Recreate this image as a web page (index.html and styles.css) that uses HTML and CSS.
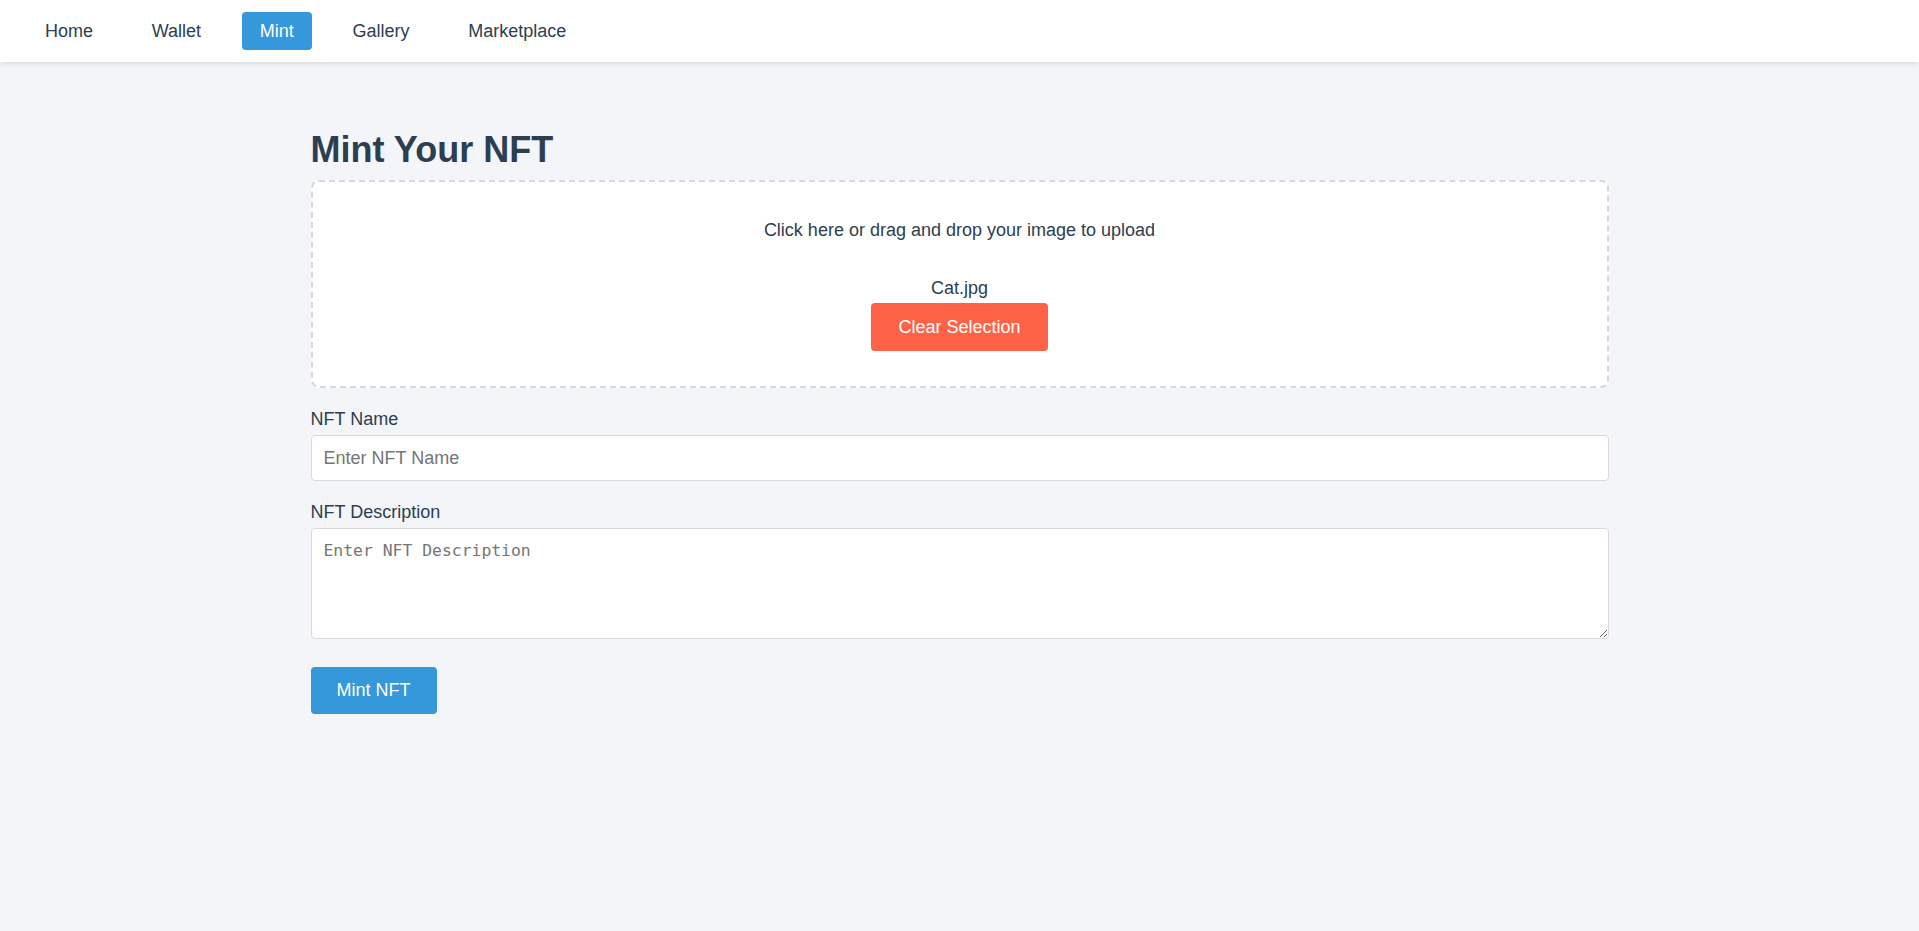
FILE: index.html
```html
<!DOCTYPE html>
<html lang="en">
<head>
<meta charset="utf-8">
<title>Mint Your NFT</title>
<link rel="stylesheet" href="styles.css">
</head>
<body>
<nav class="navbar">
  <a class="nav-link" href="#">Home</a>
  <a class="nav-link" href="#">Wallet</a>
  <a class="nav-link active" href="#">Mint</a>
  <a class="nav-link" href="#">Gallery</a>
  <a class="nav-link" href="#">Marketplace</a>
</nav>
<main class="container">
  <h1 class="title">Mint Your NFT</h1>
  <div class="upload">
    <p class="upload-hint">Click here or drag and drop your image to upload</p>
    <p class="file-name">Cat.jpg</p>
    <button class="btn btn-clear" type="button">Clear Selection</button>
  </div>
  <div class="field">
    <label class="label" for="name">NFT Name</label>
    <input class="input" id="name" type="text" placeholder="Enter NFT Name">
  </div>
  <div class="field">
    <label class="label" for="desc">NFT Description</label>
    <textarea class="textarea" id="desc" placeholder="Enter NFT Description"></textarea>
  </div>
  <button class="btn btn-mint" type="button">Mint NFT</button>
</main>
</body>
</html>
```
FILE: styles.css
```css
* { box-sizing: border-box; }
html, body { margin: 0; padding: 0; }
body {
  background: #f4f5f9;
  font-family: "Liberation Sans", Arial, sans-serif;
  font-size: 18px;
  color: #2c3e50;
}
.navbar {
  height: 62px;
  background: #ffffff;
  box-shadow: 0 2px 5px rgba(0, 0, 0, 0.1);
  display: flex;
  align-items: center;
  gap: 22.7px;
  padding-left: 27px;
}
.nav-link {
  display: block;
  height: 38px;
  line-height: 38px;
  padding: 0 18px;
  border-radius: 4px;
  color: #2c3e50;
  text-decoration: none;
}
.nav-link.active {
  background: #3498db;
  color: #ffffff;
}
.container {
  max-width: 1298px;
  margin: 0 auto;
  padding-top: 67px;
}
.title {
  margin: 0 0 9px;
  font-size: 36px;
  font-weight: bold;
  line-height: normal;
}
.upload {
  background: #ffffff;
  border: 2px dashed #d5d8de;
  border-radius: 8px;
  text-align: center;
  padding: 38px 20px 35px;
}
.upload-hint {
  margin: 0 0 38px;
  line-height: 20px;
}
.file-name {
  margin: 0 0 5px;
  line-height: 20px;
}
.btn {
  border: none;
  border-radius: 4px;
  color: #ffffff;
  font-family: "Liberation Sans", Arial, sans-serif;
  font-size: 18px;
  line-height: 20px;
  padding: 14px 27px;
  cursor: pointer;
}
.btn-clear { background: #ff6347; }
.btn-mint {
  background: #3498db;
  margin-top: 28px;
  padding: 13px 26px 14px;
}
.field { margin-top: 21px; }
.label {
  display: block;
  line-height: 20px;
  margin-bottom: 6px;
}
.input {
  display: block;
  width: 100%;
  height: 46px;
  padding: 0 12px;
  border: 1px solid #d6d9de;
  border-radius: 4px;
  background: #ffffff;
  font-family: "Liberation Sans", Arial, sans-serif;
  font-size: 18px;
  color: #2c3e50;
}
.textarea {
  display: block;
  width: 100%;
  height: 111px;
  padding: 12px 12px;
  border: 1px solid #d6d9de;
  border-radius: 4px;
  background: #ffffff;
  font-family: "DejaVu Sans Mono", monospace;
  font-size: 16.4px;
  color: #2c3e50;
  resize: vertical;
}
.input::placeholder, .textarea::placeholder { color: #757575; }
```
